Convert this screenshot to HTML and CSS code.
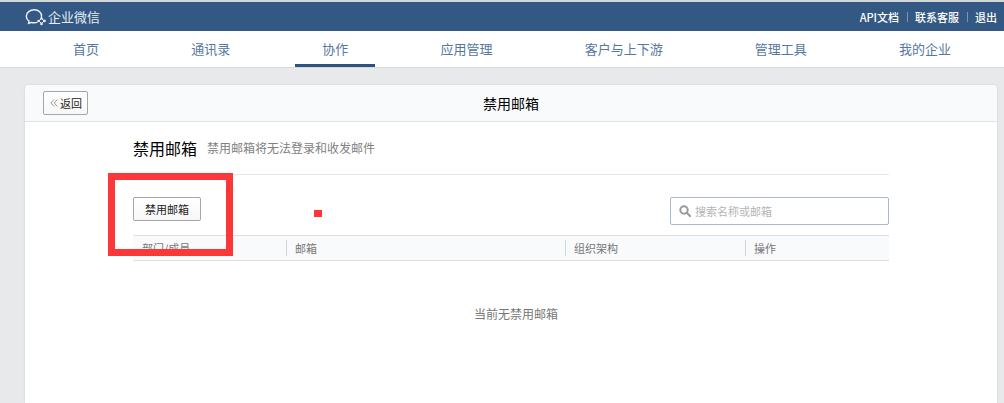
FILE: index.html
```html
<!DOCTYPE html>
<html lang="zh-cn">
<head>
    <meta charset="utf-8" />
    <meta name="viewport" content="width=device-width, initial-scale=1" />
    <title>企业微信 - 禁用邮箱</title>
    <link rel="stylesheet" href="styles.css">
</head>

<body>
    <header class="topbar">
        <a class="logo" href="#">
            <svg class="logo-icon" width="22" height="18" viewBox="0 0 22 18" fill="none" stroke="currentColor">
                <path d="M16.500 8.500C17 4.600 13.600 1.800 9.300 1.800S1.300 4.600 1.300 8.200c0 2.200 1 3.800 2.700 5l-.5 2.400 2.700-1.200c1.900.5 4 .6 5.800 0" stroke-width="1.500" stroke-linecap="round" stroke-linejoin="round" />
                <path d="M16.500 10.500l2.600 2.400-2.600 2.700-2.700-2.700z" stroke-width="1" stroke-linejoin="round" />
                <circle cx="16.500" cy="10.300" r="1.200" fill="currentColor" stroke="none" />
                <circle cx="19.500" cy="12.900" r="1.300" fill="currentColor" stroke="none" />
                <circle cx="16.500" cy="15.900" r="1.300" fill="currentColor" stroke="none" />
                <circle cx="13.500" cy="12.900" r="1.200" fill="currentColor" stroke="none" />
            </svg>
            <span>企业微信</span>
        </a>
        <div class="toplinks">
            <a href="#">API文档</a>
            <a href="#">联系客服</a>
            <a href="#">退出</a>
        </div>
    </header>

    <nav class="nav">
        <a href="#">首页</a>
        <a href="#">通讯录</a>
        <a class="current" href="#">协作</a>
        <a href="#">应用管理</a>
        <a href="#">客户与上下游</a>
        <a href="#">管理工具</a>
        <a href="#">我的企业</a>
    </nav>

    <main class="card">
        <div class="card-head">
            <button class="btn btn-back" type="button">
                <svg width="8" height="8" viewBox="0 0 8 8" fill="none" stroke="#999">
                    <path d="M4 .5L1 4l3 3.500M7.300.5l-3 3.500 3 3.500" />
                </svg>
                返回
            </button>
            <h1>禁用邮箱</h1>
        </div>

        <div class="card-body">
            <div class="section-title">
                <h2>禁用邮箱</h2>
                <p>禁用邮箱将无法登录和收发邮件</p>
            </div>

            <div class="toolbar">
                <button class="btn" type="button">禁用邮箱</button>
                <label class="search">
                    <svg width="12" height="12" viewBox="0 0 12 12" fill="none" stroke="#999" stroke-width="2">
                        <circle cx="5" cy="5" r="3.700" />
                        <path d="M7.800 7.800L11 11" stroke-linecap="round" />
                    </svg>
                    <input type="text" placeholder="搜索名称或邮箱" aria-label="搜索名称或邮箱">
                </label>
                <!-- 标注 -->
                <div class="mark-box"></div>
                <div class="mark-dot"></div>
            </div>

            <table class="list">
                <colgroup>
                    <col class="col-member">
                    <col class="col-mail">
                    <col class="col-org">
                    <col class="col-action">
                </colgroup>
                <thead>
                    <tr>
                        <th><span>部门/成员</span></th>
                        <th><span>邮箱</span></th>
                        <th><span>组织架构</span></th>
                        <th><span>操作</span></th>
                    </tr>
                </thead>
                <tbody>
                    <tr>
                        <td class="empty" colspan="4">当前无禁用邮箱</td>
                    </tr>
                </tbody>
            </table>
        </div>
    </main>
</body>
</html>
```
FILE: styles.css
```css
* {
    margin: 0;
    padding: 0;
    box-sizing: border-box;
}

body {
    display: flex;
    flex-direction: column;
    min-height: 100vh;
    background: #e7e9eb;
    color: #000;
    font-family: "Noto Sans CJK SC", sans-serif;
    font-size: 11px;
    line-height: 16px;
}

a {
    color: inherit;
    text-decoration: none;
}

button,
input {
    font: inherit;
}

.topbar {
    display: flex;
    align-items: center;
    justify-content: space-between;
    height: 31px;
    padding: 0 7px 0 25px;
    border-top: 2px solid #d3d5d7;
    background: #335883;
    color: #fff;
}

.logo {
    display: flex;
    align-items: center;
    gap: 1px;
    color: #e9eef4;
    font-size: 13px;
}

.toplinks {
    display: flex;
    font-weight: 500;
}

.toplinks a + a {
    position: relative;
    margin-left: 16px;
}

.toplinks a + a::before {
    content: "";
    position: absolute;
    left: -8px;
    top: 3px;
    height: 10px;
    border-left: 1px solid #7c94b0;
}

.nav {
    display: flex;
    justify-content: space-between;
    height: 37px;
    padding: 0 26px 0 46px;
    border-bottom: 1px solid #d5d7d9;
    background: #fff;
    color: #5577a2;
    font-size: 13px;
    line-height: 36px;
}

.nav a {
    padding: 0 27px;
}

.nav .current {
    border-bottom: 3px solid #2d5481;
}

.card {
    flex: 1;
    margin: 17px 7px 0 25px;
    border-radius: 4px 4px 0 0;
    background: #fff;
    box-shadow: 0 0 2px rgba(0, 0, 0, .15);
}

.card-head {
    display: grid;
    grid-template-columns: 1fr auto 1fr;
    align-items: center;
    height: 37px;
    padding: 0 18px;
    border-bottom: 1px solid #e0e3e6;
    border-radius: 4px 4px 0 0;
    background: #f9fafc;
}

.card-head h1 {
    font-size: 14px;
    font-weight: 400;
}

.btn {
    height: 24px;
    padding: 0 11px;
    border: 1px solid #a6a6a6;
    border-radius: 2px;
    background: linear-gradient(#fff, #f7f7f7);
    color: #222;
    line-height: 20px;
}

.btn-back {
    display: flex;
    align-items: center;
    justify-self: start;
    gap: 2px;
    padding: 0 5px 0 6px;
}

.card-body {
    margin: 0 108px;
}

.section-title {
    display: flex;
    align-items: center;
    gap: 10px;
    height: 53px;
    border-bottom: 1px solid #e4e6e9;
}

.section-title h2 {
    font-size: 16px;
    font-weight: 400;
}

.section-title p {
    color: #808080;
    font-size: 12px;
}

.toolbar {
    position: relative;
    display: flex;
    align-items: flex-start;
    justify-content: space-between;
    padding: 22px 0 10px;
}

.search {
    display: flex;
    align-items: center;
    gap: 4px;
    width: 219px;
    height: 28px;
    padding: 0 8px;
    border: 1px solid #acb9c9;
    border-radius: 2px;
}

.search input {
    flex: 1;
    min-width: 0;
    border: 0;
    outline: 0;
    background: none;
}

.search input::placeholder {
    color: #b4b4b4;
}

.mark-box {
    position: absolute;
    left: -25px;
    top: -2px;
    width: 125px;
    height: 83px;
    border: 7px solid #fc3737;
    pointer-events: none;
}

.mark-dot {
    position: absolute;
    left: 181px;
    top: 35px;
    width: 8px;
    height: 7px;
    background: #fc3737;
}

.list {
    width: 100%;
    border-collapse: separate;
    border-spacing: 0;
    table-layout: fixed;
}

.col-member {
    width: 153px;
}

.col-org {
    width: 180px;
}

.col-action {
    width: 144px;
}

.list th {
    height: 26px;
    border: solid #dce0e5;
    border-width: 1px 0;
    background: #f9fafc;
    color: #777;
    font-weight: 400;
    text-align: left;
}

.list th span {
    display: block;
    padding-left: 8px;
    border-left: 1px solid #d3d6d9;
}

.list th:first-child span {
    border-color: transparent;
}

.empty {
    padding: 45px 0 20px 10px;
    color: #777;
    font-size: 12px;
    text-align: center;
}
```
